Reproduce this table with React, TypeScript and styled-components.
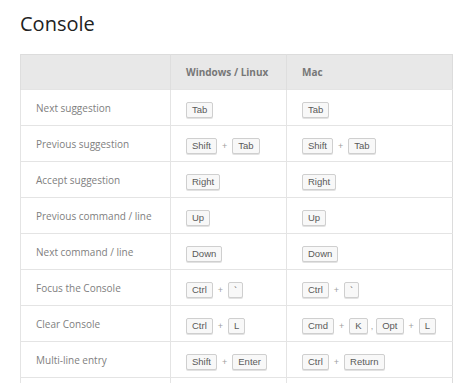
import React from 'react';
import styled, { createGlobalStyle } from 'styled-components';

const GlobalStyle = createGlobalStyle`
  html, body {
    margin: 0;
    padding: 0;
    background: #fff;
  }
  body {
    font-family: 'Open Sans', 'Liberation Sans', sans-serif;
  }
`;

type Combo = string[][];

interface Shortcut {
  label: string;
  win: Combo;
  mac: Combo;
}

const shortcuts: Shortcut[] = [
  { label: 'Next suggestion', win: [['Tab']], mac: [['Tab']] },
  { label: 'Previous suggestion', win: [['Shift', 'Tab']], mac: [['Shift', 'Tab']] },
  { label: 'Accept suggestion', win: [['Right']], mac: [['Right']] },
  { label: 'Previous command / line', win: [['Up']], mac: [['Up']] },
  { label: 'Next command / line', win: [['Down']], mac: [['Down']] },
  { label: 'Focus the Console', win: [['Ctrl', '`']], mac: [['Ctrl', '`']] },
  { label: 'Clear Console', win: [['Ctrl', 'L']], mac: [['Cmd', 'K'], ['Opt', 'L']] },
  { label: 'Multi-line entry', win: [['Shift', 'Enter']], mac: [['Ctrl', 'Return']] },
  { label: '', win: [], mac: [] },
];

const Keys = ({ combos }: { combos: Combo }) => (
  <KeyLine>
    {combos.map((combo, i) => (
      <React.Fragment key={i}>
        {i > 0 && <Comma>,</Comma>}
        {combo.map((k, j) => (
          <React.Fragment key={j}>
            {j > 0 && <Plus>+</Plus>}
            <Key>{k}</Key>
          </React.Fragment>
        ))}
      </React.Fragment>
    ))}
  </KeyLine>
);

const App = () => {
  return (
    <Page>
      <GlobalStyle />
      <Title>Console</Title>
      <Table>
        <colgroup>
          <col style={{ width: 150 }} />
          <col style={{ width: 116 }} />
          <col style={{ width: 166 }} />
        </colgroup>
        <thead>
          <tr>
            <HeadCell />
            <HeadCell>Windows / Linux</HeadCell>
            <HeadCell>Mac</HeadCell>
          </tr>
        </thead>
        <tbody>
          {shortcuts.map((s, i) => (
            <tr key={i}>
              <Cell>{s.label}</Cell>
              <Cell>
                <Keys combos={s.win} />
              </Cell>
              <Cell>
                <Keys combos={s.mac} />
              </Cell>
            </tr>
          ))}
        </tbody>
      </Table>
    </Page>
  );
};

const Page = styled.div`
  padding: 12px 0 0 20px;
  height: 383px;
  box-sizing: border-box;
  overflow: hidden;
`;

const Title = styled.h1`
  margin: 0 0 18px;
  font-size: 20px;
  line-height: 24px;
  font-weight: 400;
  color: #222;
`;

const Table = styled.table`
  width: 432px;
  table-layout: fixed;
  border-collapse: collapse;
  border: 1px solid #dcdcdc;
`;

const HeadCell = styled.th`
  height: 34px;
  padding: 0 15px;
  background: #e8e8e8;
  border-left: 1px solid #dedede;
  text-align: left;
  font-size: 10px;
  font-weight: 700;
  color: #777;
`;

const Cell = styled.td`
  height: 35px;
  padding: 0 15px;
  border-top: 1px solid #e4e4e4;
  border-left: 1px solid #e4e4e4;
  font-size: 10px;
  color: #808080;
  vertical-align: middle;
`;

const KeyLine = styled.div`
  display: flex;
  align-items: center;
  padding-top: 4px;
`;

const Key = styled.span`
  display: inline-block;
  padding: 0 5px;
  height: 14px;
  line-height: 14px;
  font-family: 'Liberation Sans', Arial, sans-serif;
  font-size: 9.5px;
  color: #5a5a5a;
  background: #f8f8f8;
  border: 1px solid #cfcfcf;
  border-radius: 2px;
  box-shadow: 0 1px 0 #e2e2e2;
`;

const Plus = styled.span`
  margin: 0 5px;
  font-family: 'Liberation Sans', Arial, sans-serif;
  font-size: 9px;
  color: #a0a0a0;
`;

const Comma = styled(Plus)`
  margin: 0 3px 0 3px;
`;

export default App;
